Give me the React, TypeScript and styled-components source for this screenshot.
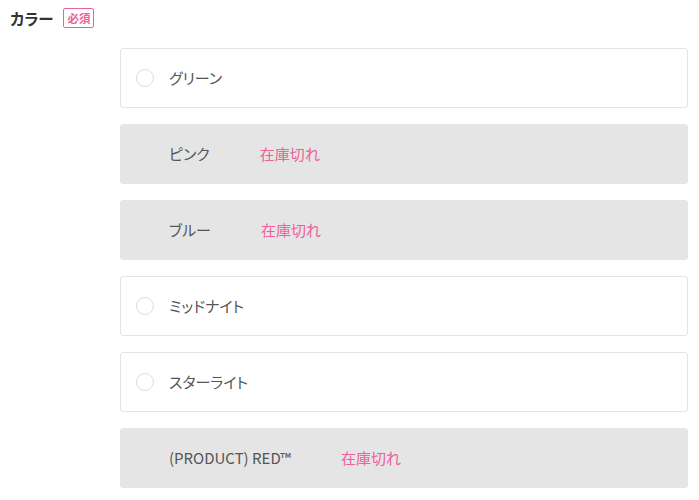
import React from 'react';
import styled, { createGlobalStyle } from 'styled-components';

const GlobalStyle = createGlobalStyle`
  body {
    margin: 0;
    background: #ffffff;
    font-family: "Noto Sans CJK JP", "Noto Sans", sans-serif;
    font-feature-settings: "palt";
    color: #333333;
  }
`;

const Section = styled.section`
  padding: 8px 11px 0 10px;
`;

const Header = styled.div`
  display: flex;
  align-items: center;
  gap: 10px;
  height: 20px;
`;

const Label = styled.h3`
  margin: 0;
  font-size: 15.5px;
  font-weight: 700;
  color: #333333;
`;

const RequiredBadge = styled.span`
  display: inline-flex;
  align-items: center;
  justify-content: center;
  height: 20px;
  padding: 0 3px;
  box-sizing: border-box;
  border: 1px solid #f0609a;
  border-radius: 2px;
  font-size: 11.5px;
  font-weight: 700;
  color: #f0609a;
`;

const OptionList = styled.ul`
  list-style: none;
  margin: 20px 0 0 110px;
  padding: 0;
  display: flex;
  flex-direction: column;
  gap: 16px;
`;

const Option = styled.li<{ $soldOut: boolean }>`
  display: flex;
  align-items: center;
  height: 60px;
  box-sizing: border-box;
  padding: 0 15px 1px;
  border-radius: 3px;
  border: 1px solid ${({ $soldOut }) => ($soldOut ? '#e5e5e5' : '#e3e3e3')};
  background: ${({ $soldOut }) => ($soldOut ? '#e5e5e5' : '#ffffff')};
`;

const Radio = styled.span<{ $hidden: boolean }>`
  width: 18px;
  height: 18px;
  box-sizing: border-box;
  border-radius: 50%;
  border: 1px solid #dddddd;
  background: #ffffff;
  flex-shrink: 0;
  visibility: ${({ $hidden }) => ($hidden ? 'hidden' : 'visible')};
`;

const Name = styled.span`
  margin-left: 15px;
  font-size: 15px;
  color: #555555;
`;

const SoldOut = styled.span`
  margin-left: 50px;
  font-size: 15px;
  color: #f0609a;
`;

const options = [
  { name: 'グリーン', soldOut: false },
  { name: 'ピンク', soldOut: true },
  { name: 'ブルー', soldOut: true },
  { name: 'ミッドナイト', soldOut: false },
  { name: 'スターライト', soldOut: false },
  { name: '(PRODUCT) RED™', soldOut: true },
];

export default function App() {
  return (
    <>
      <GlobalStyle />
      <Section>
        <Header>
          <Label>カラー</Label>
          <RequiredBadge>必須</RequiredBadge>
        </Header>
        <OptionList>
          {options.map(option => (
            <Option key={option.name} $soldOut={option.soldOut}>
              <Radio $hidden={option.soldOut} />
              <Name>{option.name}</Name>
              {option.soldOut && <SoldOut>在庫切れ</SoldOut>}
            </Option>
          ))}
        </OptionList>
      </Section>
    </>
  );
}
